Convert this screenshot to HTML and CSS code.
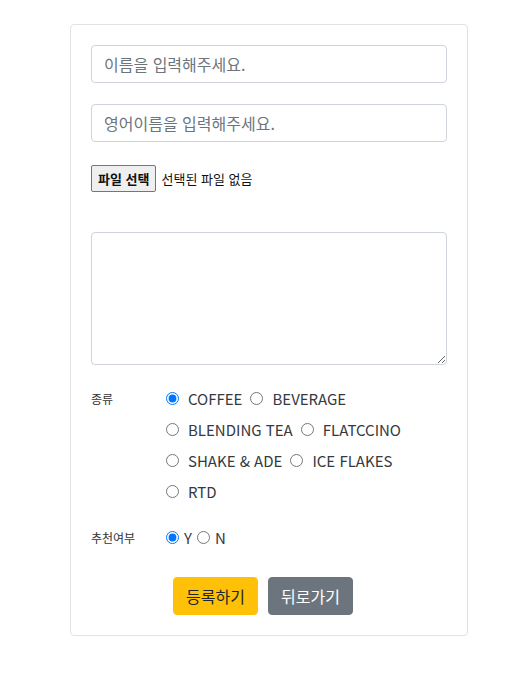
FILE: index.html
```html
<!DOCTYPE html>
<html lang="ko">
<head>
<meta charset="utf-8">
<link rel="stylesheet" href="styles.css">
</head>
<body>
<div class="card">
  <input class="form-control" type="text" placeholder="이름을 입력해주세요.">
  <input class="form-control second" type="text" placeholder="영어이름을 입력해주세요.">
  <div class="file-row">
    <button class="file-btn" type="button">파일 선택</button>
    <span class="file-text">선택된 파일 없음</span>
  </div>
  <textarea class="form-control area"></textarea>
  <div class="field kind">
    <div class="field-label">종류</div>
    <div class="options">
      <div class="opt-row">
        <label class="opt"><input type="radio" name="kind" checked><span>COFFEE</span></label>
        <label class="opt"><input type="radio" name="kind"><span>BEVERAGE</span></label>
      </div>
      <div class="opt-row">
        <label class="opt"><input type="radio" name="kind"><span>BLENDING TEA</span></label>
        <label class="opt"><input type="radio" name="kind"><span>FLATCCINO</span></label>
      </div>
      <div class="opt-row">
        <label class="opt"><input type="radio" name="kind"><span>SHAKE &amp; ADE</span></label>
        <label class="opt"><input type="radio" name="kind"><span>ICE FLAKES</span></label>
      </div>
      <div class="opt-row">
        <label class="opt"><input type="radio" name="kind"><span>RTD</span></label>
      </div>
    </div>
  </div>
  <div class="field rec">
    <div class="field-label">추천여부</div>
    <div class="options yn">
      <div class="opt-row">
        <label class="opt"><input type="radio" name="rec" checked><span>Y</span></label>
        <label class="opt"><input type="radio" name="rec"><span>N</span></label>
      </div>
    </div>
  </div>
  <div class="actions">
    <button class="btn btn-warning" type="button">등록하기</button>
    <button class="btn btn-secondary" type="button">뒤로가기</button>
  </div>
</div>
</body>
</html>
```
FILE: styles.css
```css
* { box-sizing: border-box; }
body {
  margin: 0;
  background: #fff;
  font-family: "Noto Sans CJK KR", "Noto Sans", sans-serif;
  color: #212529;
}
.card {
  width: 398px;
  margin: 24px 0 0 70px;
  border: 1px solid #dfe2e6;
  border-radius: 4px;
  padding: 20px;
  display: flex;
  flex-direction: column;
}
.form-control {
  display: block;
  width: 356px;
  height: 38px;
  padding: 6px 12px;
  font-family: inherit;
  font-size: 16px;
  color: #495057;
  border: 1px solid #ced4da;
  border-radius: 4px;
  background: #fff;
  outline: none;
}
.form-control::placeholder { color: #6c757d; }
.second { margin-top: 21px; }
.file-row {
  margin-top: 23px;
  display: flex;
  align-items: center;
  height: 27px;
}
.file-btn {
  height: 27px;
  padding: 0 6px;
  font-family: inherit;
  font-size: 13px;
  font-weight: 600;
  color: #111;
  background: #efefef;
  border: 1px solid #767676;
  border-radius: 2px;
}
.file-text {
  margin-left: 5px;
  font-size: 13px;
  color: #111;
}
.area {
  margin-top: 40px;
  height: 133px;
  resize: vertical;
}
.field {
  display: flex;
  align-items: flex-start;
}
.kind { margin-top: 18px; }
.rec { margin-top: 15px; }
.field-label {
  width: 75px;
  flex: none;
  font-size: 12px;
  line-height: 31px;
  color: #333;
}
.options {
  display: flex;
  flex-direction: column;
  font-size: 15px;
  line-height: 31px;
}
.opt-row {
  display: flex;
  align-items: center;
  height: 31px;
}
.opt {
  display: inline-flex;
  align-items: center;
  margin-right: 8px;
  color: #343a40;
}
.opt input {
  margin: 0 9px 0 0;
  width: 13px;
  height: 13px;
}
.yn .opt { margin-right: 5px; }
.yn .opt input { margin-right: 5px; }
.actions {
  margin-top: 24px;
  display: flex;
  justify-content: center;
  gap: 10px;
  padding-right: 12px;
}
.btn {
  height: 38px;
  padding: 0 12px;
  font-family: inherit;
  font-size: 16px;
  border: 1px solid transparent;
  border-radius: 4px;
}
.btn-warning { background: #ffc107; border-color: #ffc107; color: #212529; }
.btn-secondary { background: #6c757d; border-color: #6c757d; color: #fff; }
```
